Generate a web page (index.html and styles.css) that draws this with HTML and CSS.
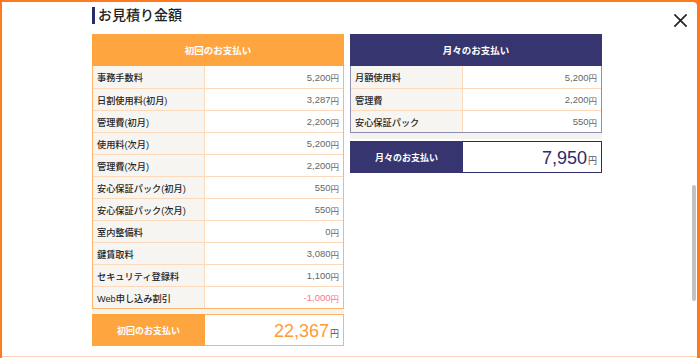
FILE: index.html
```html
<!DOCTYPE html>
<html lang="ja">
<head>
<meta charset="utf-8">
<link rel="stylesheet" href="styles.css">
</head>
<body>
<div class="modal">
  <button class="close" aria-label="閉じる">
    <svg width="16" height="16" viewBox="0 0 16 16"><path d="M1.5 1.5 L14.5 14.5 M14.5 1.5 L1.5 14.5" stroke="#222" stroke-width="1.8" fill="none"/></svg>
  </button>
  <div class="scrollbar"></div>
  <div class="content">
    <h2 class="title">お見積り金額</h2>
    <div class="columns">
      <div class="col">
        <div class="table table-orange">
          <div class="thead">初回のお支払い</div>
          <div class="row"><div class="label">事務手数料</div><div class="value">5,200<span class="yen">円</span></div></div>
          <div class="row"><div class="label">日割使用料(初月)</div><div class="value">3,287<span class="yen">円</span></div></div>
          <div class="row"><div class="label">管理費(初月)</div><div class="value">2,200<span class="yen">円</span></div></div>
          <div class="row"><div class="label">使用料(次月)</div><div class="value">5,200<span class="yen">円</span></div></div>
          <div class="row"><div class="label">管理費(次月)</div><div class="value">2,200<span class="yen">円</span></div></div>
          <div class="row"><div class="label">安心保証パック(初月)</div><div class="value">550<span class="yen">円</span></div></div>
          <div class="row"><div class="label">安心保証パック(次月)</div><div class="value">550<span class="yen">円</span></div></div>
          <div class="row"><div class="label">室内整備料</div><div class="value">0<span class="yen">円</span></div></div>
          <div class="row"><div class="label">鍵賃取料</div><div class="value">3,080<span class="yen">円</span></div></div>
          <div class="row"><div class="label">セキュリティ登録料</div><div class="value">1,100<span class="yen">円</span></div></div>
          <div class="row"><div class="label">Web申し込み割引</div><div class="value discount">-1,000<span class="yen">円</span></div></div>
        </div>
        <div class="spacer"></div>
        <div class="total total-orange">
          <div class="total-label">初回のお支払い</div>
          <div class="total-value">22,367<span class="yen">円</span></div>
        </div>
      </div>
      <div class="col">
        <div class="table table-navy">
          <div class="thead">月々のお支払い</div>
          <div class="row"><div class="label">月額使用料</div><div class="value">5,200<span class="yen">円</span></div></div>
          <div class="row"><div class="label">管理費</div><div class="value">2,200<span class="yen">円</span></div></div>
          <div class="row"><div class="label">安心保証パック</div><div class="value">550<span class="yen">円</span></div></div>
        </div>
        <div class="spacer spacer-navy"></div>
        <div class="total total-navy">
          <div class="total-label">月々のお支払い</div>
          <div class="total-value">7,950<span class="yen">円</span></div>
        </div>
      </div>
    </div>
  </div>
  <div class="bottom-line"></div>
</div>
</body>
</html>
```

FILE: styles.css
```css
* { box-sizing: border-box; }
html, body { margin: 0; padding: 0; }
body {
  background: #ff7a1c;
  width: 700px;
  height: 358px;
  overflow: hidden;
  font-family: "Liberation Sans", "Noto Sans CJK JP", sans-serif;
  color: #333;
}
.modal {
  position: relative;
  margin: 2px 3px 0 2px;
  height: 356px;
  background: #fff;
  border-radius: 0 4px 0 0;
  overflow: hidden;
  display: flex;
  flex-direction: column;
}
.close {
  position: absolute;
  top: 11px;
  right: 8px;
  width: 16px;
  height: 16px;
  padding: 0;
  border: 0;
  background: none;
  display: flex;
}
.close svg { width: 15px; height: 15px; }
.scrollbar {
  position: absolute;
  right: 1px;
  top: 183px;
  width: 4px;
  height: 116px;
  background: #c2c2c2;
  border-radius: 2px;
}
.content {
  flex: 1;
  padding: 5px 0 0 90px;
}
.title {
  margin: 0;
  display: flex;
  align-items: center;
  height: 17px;
  border-left: 3px solid #2b2a6b;
  padding-left: 3px;
  font-size: 14px;
  font-weight: 500;
  color: #222;
  line-height: 17px;
}
.columns {
  display: flex;
  gap: 6px;
  margin-top: 10px;
}
.col {
  width: 252px;
  display: flex;
  flex-direction: column;
}
.table {
  border: 1px solid #ffb468;
  border-top: 0;
}
.table-navy { border-color: #8f8eb3; }
.thead {
  height: 32px;
  display: flex;
  align-items: center;
  justify-content: center;
  font-size: 9.5px;
  font-weight: bold;
  color: #fff;
  margin: 0 -1px;
}
.table-orange .thead { background: #ffa53f; }
.table-navy .thead { background: #36356f; }
.row {
  display: flex;
  height: 22px;
  border-top: 1px solid #fdd9bb;
  font-size: 9.2px;
}
.thead + .row { border-top: 0; }
.label {
  width: 112px;
  background: #f7f5f2;
  border-right: 1px solid #fdd9bb;
  display: flex;
  align-items: center;
  padding-left: 4px;
  color: #1f1f1f;
  font-weight: 500;
}
.value {
  flex: 1;
  display: flex;
  align-items: center;
  justify-content: flex-end;
  padding-right: 4px;
  color: #666;
  font-size: 9.5px;
}
.value .yen { font-size: 8.5px; }
.discount { color: #ff7485; }
.spacer {
  height: 5px;
  background: #f5f3f0;
}
.spacer-navy { height: 8px; background: linear-gradient(#f5f3f0 0 6px, #fff 6px); }
.total {
  display: flex;
  height: 32px;
  border: 1px solid #ffb468;
}
.total-navy { border-color: #2d2c6b; }
.total-label {
  width: 113px;
  margin: -1px 0 -1px -1px;
  display: flex;
  align-items: center;
  justify-content: center;
  font-size: 9px;
  font-weight: bold;
  color: #fff;
}
.total-orange .total-label { background: #ffa53f; }
.total-navy .total-label { background: #36356f; }
.total-value {
  flex: 1;
  display: flex;
  align-items: baseline;
  justify-content: flex-end;
  padding: 5px 4px 0 0;
  font-size: 18px;
  line-height: 22px;
}
.total-orange .total-value { color: #ff9b34; }
.total-navy .total-value { color: #2d2c6b; }
.total-value .yen { font-size: 9px; color: #555; margin-left: 1px; }
.bottom-line {
  height: 1px;
  background: #fdd3c0;
  margin-bottom: 1px;
}
```
